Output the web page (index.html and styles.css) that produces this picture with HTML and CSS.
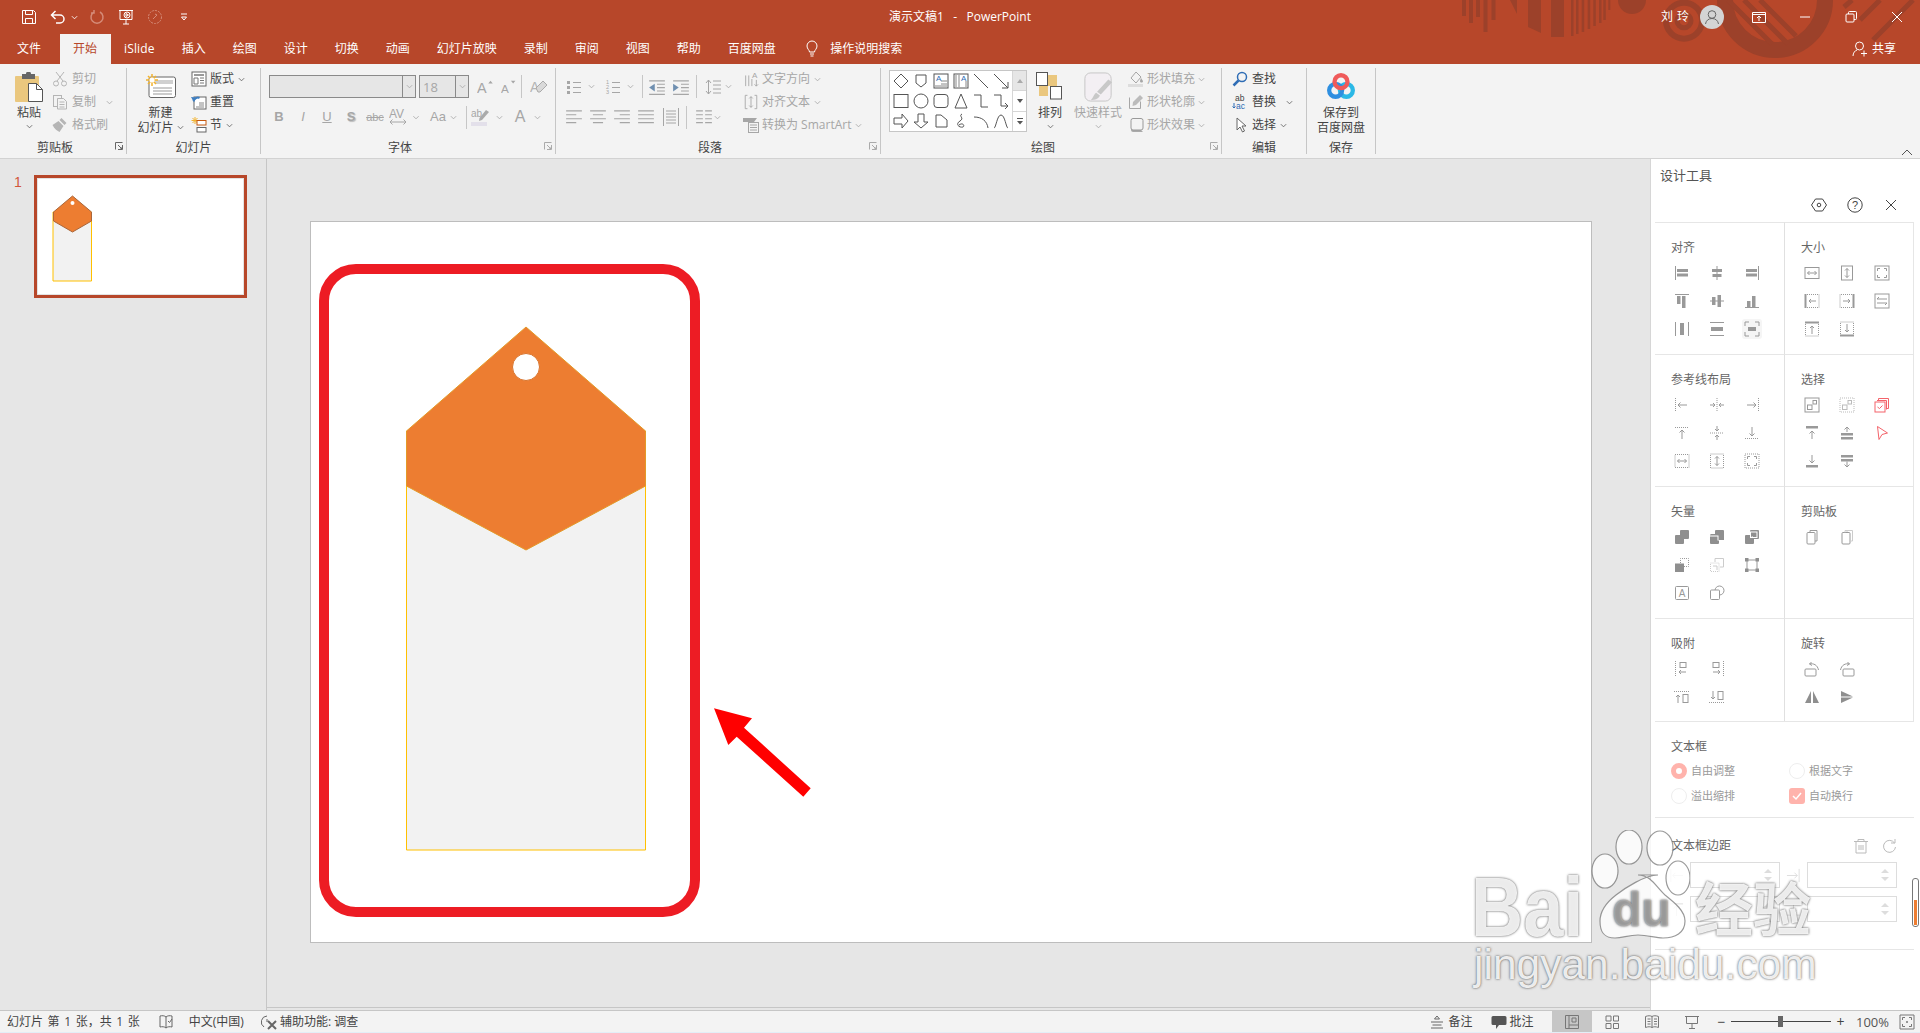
FILE: index.html
```html
<!DOCTYPE html>
<html lang="zh-CN">
<head>
<meta charset="utf-8">
<title>演示文稿1 - PowerPoint</title>
<link rel="stylesheet" href="styles.css">
</head>
<body>
<svg class="sprite" aria-hidden="true">
<defs>
<symbol id="chev" viewBox="0 0 8 8"><path d="M1 2.5l3 3 3-3"/></symbol>
<symbol id="a1" viewBox="0 0 16 16"><path d="M1.5 1v14"/><path fill="#999" stroke="none" d="M3 4h11v3H3zM3 8.5h11v3H3z"/></symbol>
<symbol id="a2" viewBox="0 0 16 16"><path d="M8 1v14"/><path fill="#999" stroke="none" d="M3 4h10v3H3zM3.5 9h9v3h-9z"/></symbol>
<symbol id="a3" viewBox="0 0 16 16"><path d="M14.5 1v14"/><path fill="#999" stroke="none" d="M2 4h11v3H2zM2 8.5h11v3H2z"/></symbol>
<symbol id="a4" viewBox="0 0 16 16"><path d="M1 1.5h14"/><path fill="#999" stroke="none" d="M3 3h3.5v8H3zM8 3h3.5v12H8z"/></symbol>
<symbol id="a5" viewBox="0 0 16 16"><path d="M1 8h14"/><path fill="#999" stroke="none" d="M3 4h3.5v8H3zM8.5 2H12v12H8.5z"/></symbol>
<symbol id="a6" viewBox="0 0 16 16"><path d="M1 14.5h14"/><path fill="#999" stroke="none" d="M3 8h3.5v6H3zM8 3h3.5v11H8z"/></symbol>
<symbol id="a7" viewBox="0 0 16 16"><path d="M1.5 1v14M14.5 1v14"/><path fill="#999" stroke="none" d="M6 2h4v12H6z"/></symbol>
<symbol id="a8" viewBox="0 0 16 16"><path d="M1 1.5h14M1 14.5h14"/><path fill="#999" stroke="none" d="M2 6h12v4H2z"/></symbol>
<symbol id="a9" viewBox="0 0 16 16"><path d="M1 5V1h4M11 1h4v4M15 11v4h-4M5 15H1v-4"/><path fill="#999" stroke="none" d="M4 6h8v4H4z"/></symbol>
<symbol id="s1" viewBox="0 0 16 16"><rect x="1" y="2.5" width="14" height="11"/><path d="M3.5 8h9M5.5 6l-2 2 2 2M10.5 6l2 2-2 2"/></symbol>
<symbol id="s2" viewBox="0 0 16 16"><rect x="2.5" y="1" width="11" height="14"/><path d="M8 3.5v9M6 5.500l2-2 2 2M6 10.500l2 2 2-2"/></symbol>
<symbol id="s3" viewBox="0 0 16 16"><rect x="1" y="1" width="14" height="14"/><path d="M3.500 6V3.500H6M10 3.500h2.500V6M12.500 10v2.500H10M6 12.500H3.500V10"/></symbol>
<symbol id="s4" viewBox="0 0 16 16"><path stroke-width="2" d="M1.500 1v14"/><path stroke-dasharray="1 1" d="M3 1.500h12v13H3"/><path d="M12 8H5M7 6L5 8l2 2"/></symbol>
<symbol id="s5" viewBox="0 0 16 16"><path stroke-width="2" d="M14.500 1v14"/><path stroke-dasharray="1 1" d="M13 1.500H1v13h12"/><path d="M4 8h7M9 6l2 2-2 2"/></symbol>
<symbol id="s6" viewBox="0 0 16 16"><rect x="1" y="1" width="14" height="14"/><path d="M3 6h10M3 6l2-2M13 10H3M13 10l-2 2"/></symbol>
<symbol id="s7" viewBox="0 0 16 16"><path stroke-width="2" d="M1 1.500h14"/><path stroke-dasharray="1 1" d="M1.500 3v12h13V3"/><path d="M8 13V5M6 7l2-2 2 2"/></symbol>
<symbol id="s8" viewBox="0 0 16 16"><path stroke-width="2" d="M1 14.500h14"/><path stroke-dasharray="1 1" d="M1.500 13V1h13v12"/><path d="M8 3v8M6 9l2 2 2-2"/></symbol>
<symbol id="g1" viewBox="0 0 16 16"><path stroke-dasharray="1 1" d="M1.500 1v14"/><path d="M13 8H4M6.500 5.500L4 8l2.500 2.500"/></symbol>
<symbol id="g2" viewBox="0 0 16 16"><path stroke-dasharray="1 1" d="M8 1v14"/><path d="M1 8h5M4 6l2 2-2 2M15 8h-5M12 6l-2 2 2 2"/></symbol>
<symbol id="g3" viewBox="0 0 16 16"><path stroke-dasharray="1 1" d="M14.500 1v14"/><path d="M3 8h9M9.500 5.500L12 8l-2.500 2.500"/></symbol>
<symbol id="g4" viewBox="0 0 16 16"><path stroke-dasharray="1 1" d="M1 2.500h14"/><path d="M8 14V5M5.500 7.500L8 5l2.500 2.500"/></symbol>
<symbol id="g5" viewBox="0 0 16 16"><path stroke-dasharray="1 1" d="M1 8h14"/><path d="M8 1v5M6 4l2 2 2-2M8 15v-5M6 12l2-2 2 2"/></symbol>
<symbol id="g6" viewBox="0 0 16 16"><path stroke-dasharray="1 1" d="M1 13.500h14"/><path d="M8 2v9M5.500 8.500L8 11l2.500-2.500"/></symbol>
<symbol id="g7" viewBox="0 0 16 16"><rect x="1" y="1.500" width="14" height="13" stroke-dasharray="1 1"/><path d="M3.500 8h9M5.500 6l-2 2 2 2M10.500 6l2 2-2 2"/></symbol>
<symbol id="g8" viewBox="0 0 16 16"><rect x="1.500" y="1" width="13" height="14" stroke-dasharray="1 1"/><path d="M8 3.500v9M6 5.500l2-2 2 2M6 10.500l2 2 2-2"/></symbol>
<symbol id="g9" viewBox="0 0 16 16"><rect x="1" y="1" width="14" height="14" stroke-dasharray="1 1"/><path d="M3.500 6V3.500H6M10 3.500h2.500V6M12.500 10v2.500H10M6 12.500H3.500V10"/></symbol>
<symbol id="se1" viewBox="0 0 16 16"><rect x="1" y="1" width="14" height="14"/><rect x="3.500" y="8" width="4.500" height="4.500"/><rect x="9" y="3.500" width="3.500" height="3.500"/></symbol>
<symbol id="se2" viewBox="0 0 16 16"><rect x="1" y="1" width="14" height="14" stroke-dasharray="1 1" stroke="#bbb"/><rect x="3.500" y="8" width="4.500" height="4.500" stroke="#bbb"/><rect x="9" y="3.500" width="3.500" height="3.500" stroke="#bbb"/></symbol>
<symbol id="se3" viewBox="0 0 16 16"><path stroke="#f4636a" d="M4.500 3.500v-2h10v10h-2"/><path stroke="#f4636a" d="M3 3.500h9.500v9"/><rect x="1" y="5" width="10" height="10" stroke="#f4636a"/><path stroke="#f4636a" d="M3.500 10l2 1.500L8.500 8.500"/></symbol>
<symbol id="se4" viewBox="0 0 16 16"><path fill="#999" stroke="none" d="M2 1h12v2.500H2z"/><path d="M8 14V6M5.500 8.500L8 6l2.500 2.500"/></symbol>
<symbol id="se5" viewBox="0 0 16 16"><path fill="#999" stroke="none" d="M2 8h12v2.500H2zM2 12h12v2.500H2z"/><path d="M8 7V2M5.500 4.500L8 2l2.500 2.500"/></symbol>
<symbol id="se6" viewBox="0 0 16 16"><path stroke="#f4636a" d="M3.500 1.500l10 6.500-5.500 1.500-3 5z"/></symbol>
<symbol id="se7" viewBox="0 0 16 16"><path fill="#999" stroke="none" d="M2 12h12v2.500H2z"/><path d="M8 2v8M5.500 7.500L8 10l2.500-2.500"/></symbol>
<symbol id="se8" viewBox="0 0 16 16"><path fill="#999" stroke="none" d="M2 2h12v2.500H2zM2 6h12v2.500H2z"/><path d="M8 8.500V14M5.500 11.500L8 14l2.500-2.500"/></symbol>
<symbol id="v1" viewBox="0 0 16 16"><path fill="#8f8f8f" stroke="none" d="M2 6h4V2q0-1 1-1h7q1 0 1 1v7q0 1-1 1h-4v4q0 1-1 1H2q-1 0-1-1V7q0-1 1-1z"/></symbol>
<symbol id="v2" viewBox="0 0 16 16"><path fill="#8f8f8f" stroke="none" d="M1 6.500h8.500V11H15V2q0-1-1-1H7q-1 0-1 1v3H2q-1 0-1 1.500zM1 7.500V14q0 1 1 1h7q1 0 1-1v-2.500H8.500V7.500z"/></symbol>
<symbol id="v3" viewBox="0 0 16 16"><path fill="#8f8f8f" fill-rule="evenodd" stroke="none" d="M2 6h4V2q0-1 1-1h7q1 0 1 1v7q0 1-1 1h-4v4q0 1-1 1H2q-1 0-1-1V7q0-1 1-1zM7.500 7.500V9h1.500V7.500z"/><rect x="6.500" y="3" width="6.500" height="5.500" fill="none" stroke="#fff"/></symbol>
<symbol id="v4" viewBox="0 0 16 16"><path stroke-dasharray="1 1" d="M6.500 6V1.500h8v8H10"/><path fill="#8f8f8f" stroke="none" d="M1 6.500h9v8.500H1z"/></symbol>
<symbol id="v5" viewBox="0 0 16 16"><g stroke="#ccc"><rect x="1.500" y="6" width="8.500" height="8.500" stroke-dasharray="1 1"/><path d="M6 5V1.500h8.500V10H11"/><path d="M4 9h4v4"/></g></symbol>
<symbol id="v6" viewBox="0 0 16 16"><rect x="3" y="3" width="10" height="10"/><path fill="#8f8f8f" stroke="none" d="M1 1h3.500v3.500H1zM11.500 1H15v3.500h-3.500zM1 11.500h3.500V15H1zM11.500 11.500H15V15h-3.500z"/></symbol>
<symbol id="v7" viewBox="0 0 16 16"><rect x="1.500" y="1.500" width="13" height="13" rx="1"/><text class="svgt" x="8" y="12" font-size="10" fill="#999" stroke="none" text-anchor="middle">A</text></symbol>
<symbol id="v8" viewBox="0 0 16 16"><circle cx="10.500" cy="5.500" r="4.500"/><rect x="1.500" y="5" width="9" height="9.500" rx="1" fill="#fff"/></symbol>
<symbol id="c1" viewBox="0 0 16 16"><rect x="3" y="3.500" width="8" height="11.500" rx="1"/><path d="M6 3.500v-2h7v10.500h-2"/></symbol>
<symbol id="c2" viewBox="0 0 16 16"><rect x="3" y="3.500" width="8" height="11.500" rx="1"/><path stroke="#ccc" d="M6 3.500v-2h7.500v10.500H11"/><path stroke="#ccc" d="M8 1v2"/></symbol>
<symbol id="n1" viewBox="0 0 16 16"><path stroke-dasharray="1 1" d="M1.500 0v16"/><rect x="6" y="1.500" width="6" height="5"/><path d="M12 11H5M7 9l-2 2 2 2"/></symbol>
<symbol id="n2" viewBox="0 0 16 16"><path stroke-dasharray="1 1" d="M14.500 0v16"/><rect x="4" y="1.500" width="6" height="5"/><path d="M4 11h7M9 9l2 2-2 2"/></symbol>
<symbol id="n3" viewBox="0 0 16 16"><path stroke-dasharray="1 1" d="M0 2.500h16"/><rect x="9" y="5.500" width="5" height="8"/><path d="M4 14V6M2 8l2-2 2 2"/></symbol>
<symbol id="n4" viewBox="0 0 16 16"><path stroke-dasharray="1 1" d="M0 13.500h16"/><rect x="9" y="2.500" width="5" height="8"/><path d="M4 2v8M2 8l2 2 2-2"/></symbol>
<symbol id="r1" viewBox="0 0 16 16"><rect x="1" y="8" width="11" height="7" rx="1"/><path d="M5.500 3c4-1 8 1 9 6M5.500 3l2-2M5.500 3l2.500 1.500"/></symbol>
<symbol id="r2" viewBox="0 0 16 16"><rect x="4" y="8" width="11" height="7" rx="1"/><path d="M10.500 3c-4-1-8 1-9 6M10.500 3l-2-2M10.500 3L8 4.500"/></symbol>
<symbol id="r3" viewBox="0 0 16 16"><path fill="#8f8f8f" stroke="none" d="M7 2v12H1zM9 2v12h6z"/></symbol>
<symbol id="r4" viewBox="0 0 16 16"><path fill="#8f8f8f" stroke="none" d="M2 2l12 5.500H2zM2 8.500h12L2 14z"/></symbol>

<symbol id="paste" viewBox="0 0 28 30"><rect x="0" y="4" width="24" height="26" rx="1" fill="#eac77e" stroke="none"/><path fill="#666" stroke="none" d="M7 2h4a2.500 2.500 0 0 1 5 0h4v5H7z"/><path fill="#fff" stroke="#555" d="M13.500 11.500h8l6 6v12h-14z"/><path stroke="#555" d="M21.500 11.500v6h6"/></symbol>
<symbol id="scis" viewBox="0 0 16 16"><path stroke="#b5b5b5" d="M4 1l7 9M12 1l-7 9"/><circle cx="4" cy="12.500" r="2.500" stroke="#b5b5b5"/><circle cx="12" cy="12.500" r="2.500" stroke="#b5b5b5"/></symbol>
<symbol id="copy" viewBox="0 0 16 16"><g stroke="#b5b5b5"><rect x="1.500" y="1.500" width="8" height="11"/><path fill="#f3f3f3" d="M5.500 4.500h6l3 3v7.500h-9z"/><path d="M7.500 8h5M7.500 10.500h5M7.500 13h5"/></g></symbol>
<symbol id="brush" viewBox="0 0 16 16"><path fill="#b5b5b5" stroke="none" d="M9.500 1l5 5-2 2-5-5zM6.500 4l5 5-4 6c-2-1-5-3-7-7z"/></symbol>
<symbol id="newsl" viewBox="0 0 30 24"><rect x="3" y="3" width="26.500" height="20.500" rx="2" fill="#fff" stroke="#666"/><path fill="#d0d0d0" stroke="none" d="M9 6h18v4H9z"/><path stroke="#999" d="M7 14h19M7 17h19M7 20h19"/><path stroke="#f2b32e" stroke-width="1.500" d="M6 0v12M0 6h12M2 2l8 8M10 2l-8 8"/><circle cx="6" cy="6" r="2.500" fill="#fff" stroke="none"/></symbol>
<symbol id="layout" viewBox="0 0 16 16"><rect x="1" y="1" width="14" height="14" fill="#fff" stroke="#666"/><path fill="#999" stroke="none" d="M3 3h10v2H3z"/><path stroke="#777" d="M3 7h4v6H3zM9 7h4M9 9.500h4M9 12h4"/></symbol>
<symbol id="reset" viewBox="0 0 16 16"><rect x="3" y="3" width="12" height="12" fill="#fff" stroke="#666"/><path stroke="#888" d="M8 9h5M8 11h5M5 13h8"/><path fill="none" stroke="#3f7fc1" stroke-width="2" d="M2.500 7c1-3 4-4 6-3"/><path fill="#3f7fc1" stroke="none" d="M0 3l5 .5-2 5z"/></symbol>
<symbol id="sect" viewBox="0 0 16 16"><path stroke="#f2b32e" d="M4 0v7M.5 3.500h7M1.500 1l5 5M6.500 1l-5 5"/><rect x="6" y="3.500" width="9" height="4.500" fill="#fff" stroke="#c55a11"/><rect x="6" y="10.500" width="9" height="4.500" fill="#fff" stroke="#666"/></symbol>
<symbol id="grow" viewBox="0 0 20 20"><text class="svgt" x="0" y="17" font-size="16" fill="#a6a6a6" stroke="none">A</text><path fill="#a6a6a6" stroke="none" d="M12.500 6L15 3l2.500 3z"/></symbol>
<symbol id="shrink" viewBox="0 0 20 20"><text class="svgt" x="0" y="17" font-size="13" fill="#a6a6a6" stroke="none">A</text><path fill="#a6a6a6" stroke="none" d="M11 3l2.500 3L16 3z"/></symbol>
<symbol id="clear" viewBox="0 0 18 18"><text class="svgt" x="0" y="14" font-size="14" fill="#b5b5b5" stroke="none">A</text><path fill="#d9d9d9" stroke="#aaa" d="M6 10l7-7 4 4-7 7H8z"/></symbol>
<symbol id="avt" viewBox="0 0 20 20"><text class="svgt" x="0" y="11" font-size="12" fill="#a6a6a6" stroke="none">AV</text><path stroke="#a6a6a6" d="M1 15h16M3.500 12.500L1 15l2.500 2.500M14.500 12.500L17 15l-2.500 2.500"/></symbol>
<symbol id="hilite" viewBox="0 0 20 20"><text class="svgt" x="0" y="10" font-size="10" fill="#a6a6a6" stroke="none">ab</text><path fill="#aaa" stroke="none" d="M15 3l3 2-7 8-3 1 .5-3z"/><path fill="#e3e0ea" stroke="none" d="M0 15h16v4H0z"/></symbol>
<symbol id="bul" viewBox="0 0 16 16"><path fill="#a6a6a6" stroke="none" d="M1 2h3v3H1zM1 7h3v3H1zM1 12h3v3H1z"/><path stroke="#a6a6a6" d="M7 3.500h8M7 8.500h8M7 13.500h8"/></symbol>
<symbol id="num" viewBox="0 0 16 16"><text class="svgt" font-size="5.500" fill="#a6a6a6" stroke="none"><tspan x="1" y="5">1</tspan><tspan x="1" y="10">2</tspan><tspan x="1" y="15">3</tspan></text><path stroke="#a6a6a6" d="M7 3.500h8M7 8.500h8M7 13.500h8"/></symbol>
<symbol id="indd" viewBox="0 0 16 16"><path stroke="#a6a6a6" d="M1 2.500h14M8 5.500h7M8 8.500h7M8 11.500h7M1 14.500h14"/><path fill="#6f8fb0" stroke="none" d="M6 5v7L1 8.500z"/></symbol>
<symbol id="indi" viewBox="0 0 16 16"><path stroke="#a6a6a6" d="M1 2.500h14M8 5.500h7M8 8.500h7M8 11.500h7M1 14.500h14"/><path fill="#6f8fb0" stroke="none" d="M1 5v7l5-3.500z"/></symbol>
<symbol id="lsp" viewBox="0 0 16 18"><path stroke="#a6a6a6" d="M8 3h8M8 7h8M8 11h8M8 15h8M3.500 2v14M1 5l2.500-3L6 5M1 13l2.500 3L6 13"/></symbol>
<symbol id="tdir" viewBox="0 0 16 18"><path stroke="#a6a6a6" d="M2 5v12M5.500 5v12M9 9v8"/><text class="svgt" x="9" y="8" font-size="9" fill="#a6a6a6" stroke="none">A</text><path stroke="#a6a6a6" d="M14 10v7M12 15l2 2 2-2"/></symbol>
<symbol id="talign" viewBox="0 0 16 18"><path stroke="#a6a6a6" d="M4 1.500H1.500v15H4M12 1.500h2.500v15H12M8 3v12M6 5l2-2 2 2M6 13l2 2 2-2"/></symbol>
<symbol id="art" viewBox="0 0 16 16"><path fill="#a6a6a6" stroke="none" d="M0 1h14l-3 4H0z"/><rect x="5.500" y="5.500" width="10" height="10" fill="#f3f3f3" stroke="#a6a6a6"/><path stroke="#a6a6a6" d="M7 8h7M7 10.500h7M7 13h7"/></symbol>
<symbol id="al" viewBox="0 0 16 16"><path stroke="#a6a6a6" d="M1 2.500h14M1 6h9M1 9.500h14M1 13h9"/></symbol>
<symbol id="ac" viewBox="0 0 16 16"><path stroke="#a6a6a6" d="M1 2.500h14M3.500 6h9M1 9.500h14M3.500 13h9"/></symbol>
<symbol id="ar" viewBox="0 0 16 16"><path stroke="#a6a6a6" d="M1 2.500h14M6 6h9M1 9.500h14M6 13h9"/></symbol>
<symbol id="aj" viewBox="0 0 16 16"><path stroke="#a6a6a6" d="M1 2.500h14M1 6h14M1 9.500h14M1 13h14"/></symbol>
<symbol id="ad" viewBox="0 0 16 18"><path stroke="#a6a6a6" d="M.5 0v18M15.500 0v18M3 3h10M3 6h10M3 9h10M3 12h10M3 15h10"/></symbol>
<symbol id="cols" viewBox="0 0 16 16"><path stroke="#a6a6a6" d="M1 2.500h6M1 6h6M1 9.500h6M1 13h6M9 2.500h6M9 6h6M9 9.500h6M9 13h6"/></symbol>
<symbol id="arrange" viewBox="0 0 28 28"><path fill="#eac77e" stroke="none" d="M12 3h9v11h-9zM3 14h9v10H3z"/><rect x="0.500" y="0.500" width="11" height="13" fill="#fff" stroke="#555"/><rect x="14.500" y="14.500" width="11" height="12.500" fill="#fff" stroke="#555"/></symbol>
<symbol id="qstyle" viewBox="0 0 32 32"><rect x="2" y="1" width="28" height="30" rx="6" fill="#f3eff3" stroke="#c4c4c4"/><path fill="#c8c8c8" stroke="none" d="M27 8l4 3-12 13-4-3z"/><path fill="#c8c8c8" stroke="none" d="M14 22l4 3c-1 3-5 5-10 5 3-2 3-6 6-8z"/></symbol>
<symbol id="fill" viewBox="0 0 16 16"><path stroke="#a6a6a6" d="M8 1l5 5-5 6-5-5z"/><path fill="#a6a6a6" stroke="none" d="M13 7l2 3c0 2-3 2-3 0z"/><path fill="#ddd" stroke="none" d="M0 13h15v3H0z"/></symbol>
<symbol id="line" viewBox="0 0 16 16"><path stroke="#a6a6a6" d="M1.500 3.500v11h11v-7"/><path fill="#bbb" stroke="none" d="M12 1l3 3-7 7-3.500 1 .5-4z"/></symbol>
<symbol id="effect" viewBox="0 0 16 16"><path fill="#aaa" stroke="none" d="M3 3v10c0 1 1 2 2 2h10z"/><rect x="3" y="1.500" width="12" height="11.500" rx="2" fill="#f3f3f3" stroke="#999"/></symbol>
<symbol id="find" viewBox="0 0 16 16"><circle cx="10" cy="6" r="4.500" stroke="#2f6db5" stroke-width="1.500"/><path stroke="#2f6db5" stroke-width="2.500" d="M6.500 9.500L1.500 14.500"/></symbol>
<symbol id="repl" viewBox="0 0 16 16"><text class="svgt" font-size="8.500" fill="#444" stroke="none"><tspan x="3" y="7">ab</tspan><tspan x="4" y="15" fill="#2f6db5">ac</tspan></text><path stroke="#2f6db5" d="M2 9v5M0.500 12.500L2 14l1.500-1.500"/></symbol>
<symbol id="sel" viewBox="0 0 16 16"><path fill="#fff" stroke="#666" d="M5 1v12l3-3 2.500 5 2-1-2.500-5h4z"/></symbol>
<symbol id="bdsave" viewBox="0 0 26 26"><g fill="none" stroke-width="4"><circle cx="18" cy="17" r="6" stroke="#2bb8e6"/><circle cx="8" cy="17" r="6" stroke="#2e8fe0"/><circle cx="13" cy="9" r="6" stroke="#ef5a5a"/></g></symbol>
<symbol id="launch" viewBox="0 0 8 8"><path d="M.5 7.500v-7h7M7.500 3v4.500H3M3 3l4 4M7 5v2H5"/></symbol>
</defs>
</svg>

<div class="app">
<header class="titlebar">
  <svg class="ornament" viewBox="0 0 520 64" aria-hidden="true">
    <defs><clipPath id="bigclip"><circle cx="375" cy="0" r="58"/></clipPath></defs>
    <g fill="#9c412a" stroke="none">
      <path d="M62 0h4v16h-4zM69 0h4v23h-4zM76 0h4v17h-4zM83.500 0h4v32h-4zM91.500 0h4v20h-4zM110 0h7v14zM128 0h13v33l-13-6zM151 0h13v37h-13zM171 0h2.500v36H171zM176 0h2.500v34H176zM181.700 0h2.500v32h-2.500zM187.700 0h2.500v29h-2.500zM193.300 0h2.500v26h-2.500zM199 0h2.500v23H199zM203.300 0h2.500v20h-2.500zM208.300 0h2v10h-2z"/>
      <circle cx="232" cy="0" r="14"/>
    </g>
    <g fill="none" stroke="#9c412a">
      <circle cx="284" cy="20.700" r="18" stroke-width="6"/>
      <circle cx="284" cy="20.700" r="7" stroke-width="5"/>
      <circle cx="375" cy="0" r="50" stroke-width="16"/>
      <g clip-path="url(#bigclip)" stroke-width="5"><path d="M328 0l44 44M344 0l44 44M360 0l36 36"/></g>
      <path stroke-width="5" d="M452 0l-8 7M480 0l-20 20M513 0l-40 40"/>
    </g>
  </svg>
  <div class="qat">
    <svg class="ic white first" viewBox="0 0 16 16"><path d="M1.500 1.500h11l2 2v11h-13z"/><path d="M4.500 1.500v4h7v-4M4.500 14.500v-5h7v5"/></svg>
    <svg class="ic white undo" viewBox="0 0 16 16"><path stroke-width="1.500" d="M2 6h8a4 4 0 0 1 0 8H6M5.500 2L1.500 6l4 4"/></svg>
    <svg class="chev white mini1"><use href="#chev"/></svg>
    <svg class="ic dim redo" viewBox="0 0 16 16"><path stroke-width="1.500" d="M11 3a6 6 0 1 1-6 0M5 1v3H2"/></svg>
    <svg class="ic white qgap" viewBox="0 0 16 16"><path d="M1 1.500h14M2 1.500v9h12v-9M8 10.500V15M5 15h6"/><circle cx="9" cy="6" r="3"/><path d="M8 4.500L10.500 6 8 7.500z"/></svg>
    <svg class="ic dim qgap" viewBox="0 0 16 16"><circle cx="8" cy="8" r="6.500" stroke-dasharray="2 1"/><path d="M6 10l4-4M8 5l2 1"/></svg>
    <svg class="chev white more" viewBox="0 0 8 8"><path d="M1 1h6M1.500 4h5l-2.500 3z"/></svg>
  </div>
  <div class="doctitle">演示文稿1 &nbsp;&nbsp;- &nbsp;&nbsp;PowerPoint</div>
  <div class="winbox">
    <span class="uname">刘玲</span>
    <span class="avatar"><svg class="ic grey" viewBox="0 0 16 16"><circle cx="8" cy="5.500" r="3.800"/><path d="M1.500 15c.5-3.500 3-5.500 6.500-5.500s6 2 6.500 5.500"/></svg></span>
    <span class="wbtn"><svg class="ic white" viewBox="0 0 16 16"><path d="M1.500 3.500h13v10h-13zM1.500 5.500h13M8 12V7.500M6 9l2-2 2 2"/></svg></span>
    <span class="wbtn"><svg class="ic white" viewBox="0 0 16 16"><path d="M3 8h10"/></svg></span>
    <span class="wbtn"><svg class="ic white" viewBox="0 0 16 16"><rect x="3" y="5" width="8" height="8" rx="1"/><path d="M5.500 5V3.500q0-1 1-1h6q1 0 1 1v6q0 1-1 1H11"/></svg></span>
    <span class="wbtn"><svg class="ic white" viewBox="0 0 16 16"><path d="M3 3l10 10M13 3L3 13"/></svg></span>
  </div>
</header>

<nav class="tabs">
  <span class="tab tab-file">文件</span>
  <span class="tab active">开始</span>
  <span class="tab islide">iSlide</span>
  <span class="tab">插入</span>
  <span class="tab">绘图</span>
  <span class="tab">设计</span>
  <span class="tab">切换</span>
  <span class="tab">动画</span>
  <span class="tab">幻灯片放映</span>
  <span class="tab">录制</span>
  <span class="tab">审阅</span>
  <span class="tab">视图</span>
  <span class="tab">帮助</span>
  <span class="tab">百度网盘</span>
  <svg class="ic white bulb" viewBox="0 0 16 16"><path d="M5.500 11c0-2-2.500-3-2.500-6a5 5 0 0 1 10 0c0 3-2.500 4-2.500 6zM6 13h4M6.500 15h3"/></svg>
  <span class="tab tellme">操作说明搜索</span>
  <span class="share"><svg class="ic white" viewBox="0 0 16 16"><circle cx="7.500" cy="5" r="4"/><path d="M1 15c0-3 2-5.500 4-6M9 12.500h6M12 9.500v6"/></svg>共享</span>
</nav>

<section class="ribbon">
  <div class="group g-clip">
    <div class="gbody">
      <div class="lbtn paste-btn"><svg class="paste-ic"><use href="#paste"/></svg><span class="ltext">粘贴</span><svg class="chev"><use href="#chev"/></svg></div>
      <div class="scol">
        <div class="srow off"><svg class="ic grey"><use href="#scis"/></svg>剪切</div>
        <div class="srow off"><svg class="ic grey"><use href="#copy"/></svg>复制<svg class="chev light ml"><use href="#chev"/></svg></div>
        <div class="srow off"><svg class="ic grey"><use href="#brush"/></svg>格式刷</div>
      </div>
    </div>
    <div class="glabel lc">剪贴板<svg class="launch"><use href="#launch"/></svg></div>
  </div>

  <div class="group g-slide">
    <div class="gbody">
      <div class="lbtn new-btn"><svg class="new-ic"><use href="#newsl"/></svg><span class="ltext">新建</span><span class="ltext">幻灯片<svg class="chev inl"><use href="#chev"/></svg></span></div>
      <div class="scol tight">
        <div class="srow"><svg class="ic"><use href="#layout"/></svg>版式<svg class="chev"><use href="#chev"/></svg></div>
        <div class="srow"><svg class="ic"><use href="#reset"/></svg>重置</div>
        <div class="srow"><svg class="ic"><use href="#sect"/></svg>节<svg class="chev"><use href="#chev"/></svg></div>
      </div>
    </div>
    <div class="glabel">幻灯片</div>
  </div>

  <div class="group g-font">
    <div class="gbody col">
      <div class="trow top">
        <span class="combo c-name"><i class="drop"><svg class="chev light"><use href="#chev"/></svg></i></span>
        <span class="combo c-size"><em>18</em><i class="drop"><svg class="chev light"><use href="#chev"/></svg></i></span>
        <svg class="tic m8"><use href="#grow"/></svg>
        <svg class="tic m6"><use href="#shrink"/></svg>
        <i class="vsep m2"></i>
        <svg class="tic m8"><use href="#clear"/></svg>
      </div>
      <div class="trow bot first-b">
        <b class="tx">B</b><i class="tx it">I</i><u class="tx">U</u><b class="tx shadow">S</b><s class="tx small">abc</s>
        <span class="tx"><svg class="tic"><use href="#avt"/></svg></span><svg class="chev light w10"><use href="#chev"/></svg>
        <span class="tx m5">Aa</span><svg class="chev light"><use href="#chev"/></svg>
        <i class="vsep m9"></i>
        <span class="tx m2"><svg class="tic"><use href="#hilite"/></svg></span><svg class="chev light m3"><use href="#chev"/></svg>
        <span class="tx big m5">A</span><svg class="chev light m2"><use href="#chev"/></svg>
      </div>
    </div>
    <div class="glabel lc">字体<svg class="launch dim2"><use href="#launch"/></svg></div>
  </div>

  <div class="group g-para">
    <div class="gbody">
      <div class="pleft">
        <div class="trow top">
          <svg class="tic w20 m8"><use href="#bul"/></svg><svg class="chev light m4"><use href="#chev"/></svg>
          <svg class="tic w20 m8"><use href="#num"/></svg><svg class="chev light m4"><use href="#chev"/></svg>
          <i class="vsep m8"></i>
          <svg class="tic m5"><use href="#indd"/></svg><svg class="tic m6"><use href="#indi"/></svg>
          <i class="vsep m6"></i>
          <svg class="tic m7"><use href="#lsp"/></svg><svg class="chev light m3"><use href="#chev"/></svg>
        </div>
        <div class="trow bot">
          <svg class="tic m9"><use href="#al"/></svg><svg class="tic m6"><use href="#ac"/></svg><svg class="tic m6"><use href="#ar"/></svg><svg class="tic m6"><use href="#aj"/></svg><svg class="tic m7"><use href="#ad"/></svg>
          <i class="vsep m6"></i>
          <svg class="tic m8"><use href="#cols"/></svg><svg class="chev light m1"><use href="#chev"/></svg>
        </div>
      </div>
      <div class="scol flat">
        <div class="srow off"><svg class="ic"><use href="#tdir"/></svg>文字方向<svg class="chev light"><use href="#chev"/></svg></div>
        <div class="srow off"><svg class="ic"><use href="#talign"/></svg>对齐文本<svg class="chev light"><use href="#chev"/></svg></div>
        <div class="srow off nowrap"><svg class="ic"><use href="#art"/></svg>转换为 SmartArt<svg class="chev light"><use href="#chev"/></svg></div>
      </div>
    </div>
    <div class="glabel lc">段落<svg class="launch dim2"><use href="#launch"/></svg></div>
  </div>

  <div class="group g-draw">
    <div class="gbody">
      <div class="gallery">
        <div class="shapes">
          <svg class="sh" viewBox="0 0 16 16"><path d="M8 1l7 7-7 7-7-7z"/></svg>
          <svg class="sh" viewBox="0 0 16 16"><path d="M3 2h10v8l-5 4-5-4z"/></svg>
          <svg class="sh" viewBox="0 0 16 16"><rect x="1" y="1" width="14" height="14"/><path stroke="#888" d="M8 8h6M8 11h6M2 13h12"/><text class="svgt" x="3" y="8" font-size="8" fill="#2f6db5" stroke="none">A</text></svg>
          <svg class="sh" viewBox="0 0 16 16"><rect x="1" y="1" width="14" height="14"/><path stroke="#888" d="M3 2v12M6 2v12M13 8v6"/><text class="svgt" x="8" y="8" font-size="8" fill="#2f6db5" stroke="none">A</text></svg>
          <svg class="sh" viewBox="0 0 16 16"><path d="M1 1l14 14"/></svg>
          <svg class="sh" viewBox="0 0 16 16"><path d="M1 1l14 14M15 9v6H9"/></svg>
          <svg class="sh" viewBox="0 0 16 16"><rect x="1" y="1.500" width="14" height="13"/></svg>
          <svg class="sh" viewBox="0 0 16 16"><circle cx="8" cy="8" r="7"/></svg>
          <svg class="sh" viewBox="0 0 16 16"><rect x="1" y="1.500" width="14" height="13" rx="3"/></svg>
          <svg class="sh" viewBox="0 0 16 16"><path d="M8 1l6 14H2z"/></svg>
          <svg class="sh" viewBox="0 0 16 16"><path d="M1 2h7v12h7"/></svg>
          <svg class="sh" viewBox="0 0 16 16"><path d="M1 2h7v11h7M12 10l3 3-3 3"/></svg>
          <svg class="sh" viewBox="0 0 16 16"><path d="M1 5h8V1l6 7-6 7v-4H1z"/></svg>
          <svg class="sh" viewBox="0 0 16 16"><path d="M5 1h6v8h4l-7 6-7-6h4z"/></svg>
          <svg class="sh" viewBox="0 0 16 16"><path d="M3 2h5l6 5v7H3z"/></svg>
          <svg class="sh" viewBox="0 0 16 16"><path d="M9 1C5 3 12 5 7 8s-1 7 3 6c2-1 0-5-4-2"/></svg>
          <svg class="sh" viewBox="0 0 16 16"><path d="M1 4c8 0 13 4 14 11"/></svg>
          <svg class="sh" viewBox="0 0 16 16"><path d="M1 15C3 15 4 2 8 2s5 13 7 13"/></svg>
        </div>
        <div class="gscroll">
          <span class="gs on"><svg viewBox="0 0 8 8"><path d="M1 6l3-4 3 4z"/></svg></span>
          <span class="gs"><svg viewBox="0 0 8 8"><path d="M1 2l3 4 3-4z"/></svg></span>
          <span class="gs"><svg viewBox="0 0 8 8"><path d="M1 1h6v1H1zM1 4h6L4 7.500z"/></svg></span>
        </div>
      </div>
      <div class="lbtn arr-btn"><svg class="arr-ic"><use href="#arrange"/></svg><span class="ltext">排列</span><svg class="chev"><use href="#chev"/></svg></div>
      <div class="lbtn qs-btn off"><svg class="qs-ic"><use href="#qstyle"/></svg><span class="ltext">快速样式</span><svg class="chev light"><use href="#chev"/></svg></div>
      <div class="scol draw-s">
        <div class="srow off"><svg class="ic"><use href="#fill"/></svg>形状填充<svg class="chev light"><use href="#chev"/></svg></div>
        <div class="srow off"><svg class="ic"><use href="#line"/></svg>形状轮廓<svg class="chev light"><use href="#chev"/></svg></div>
        <div class="srow off"><svg class="ic"><use href="#effect"/></svg>形状效果<svg class="chev light"><use href="#chev"/></svg></div>
      </div>
    </div>
    <div class="glabel lc">绘图<svg class="launch dim2"><use href="#launch"/></svg></div>
  </div>

  <div class="group g-edit">
    <div class="gbody">
      <div class="scol edit-s">
        <div class="srow"><svg class="ic"><use href="#find"/></svg>查找</div>
        <div class="srow"><svg class="ic"><use href="#repl"/></svg>替换<svg class="chev ml"><use href="#chev"/></svg></div>
        <div class="srow"><svg class="ic"><use href="#sel"/></svg>选择<svg class="chev"><use href="#chev"/></svg></div>
      </div>
    </div>
    <div class="glabel">编辑</div>
  </div>

  <div class="group g-save">
    <div class="gbody">
      <div class="lbtn save-btn"><svg class="save-ic"><use href="#bdsave"/></svg><span class="ltext">保存到</span><span class="ltext">百度网盘</span></div>
    </div>
    <div class="glabel">保存</div>
  </div>
  <svg class="collapse" viewBox="0 0 12 8"><path d="M1 7l5-5 5 5"/></svg>
</section>

<main class="main">
  <aside class="thumbs">
    <span class="num">1</span>
    <div class="thumb">
      <svg viewBox="37 178 207 117">
        <path fill="#f2f2f2" stroke="#ffc000" d="M53 212v69h38.500v-69z"/>
        <path fill="#ed7d31" stroke="#a9663a" d="M72.500 196L91.500 212v9l-19 11-19-11v-9z"/>
        <circle cx="72.500" cy="203" r="2" fill="#fff"/>
      </svg>
    </div>
  </aside>

  <div class="work">
    <div class="canvas">
      <div class="slide">
        <svg viewBox="311 222 1280 720">
          <rect x="324" y="269" width="371" height="643" rx="32" fill="none" stroke="#ed1c24" stroke-width="10"/>
          <path fill="#f2f2f2" stroke="#ffc000" d="M406.500 431v419h239V431z"/>
          <path fill="#ed7d31" stroke="#e39a28" d="M526 327l119.500 104v55L526 550l-119.500-64v-55z"/>
          <circle cx="526" cy="367" r="13.500" fill="#fff" stroke="#d9742c"/>
          <path fill="#f00" d="M714 708.300l38 10-8 9.400 66.700 60.600-7.400 8.400-66.600-60-8.400 8.300z"/>
        </svg>
      </div>
    </div>
    <div class="strip"></div>
  </div>

  <aside class="panel">
    <div class="ptitle">设计工具</div>
    <div class="ptools">
      <svg class="ic dark" viewBox="0 0 16 16"><path d="M4.500 2h7L15.500 8l-4 6h-7L.5 8z"/><circle cx="8" cy="8" r="1.800"/></svg>
      <svg class="ic dark" viewBox="0 0 16 16"><circle cx="8" cy="8" r="7.200"/><text class="svgt" x="8" y="12" font-size="11" fill="#444" stroke="none" text-anchor="middle">?</text></svg>
      <svg class="ic dark" viewBox="0 0 16 16"><path d="M3 3l10 10M13 3L3 13"/></svg>
    </div>
    <div class="pgrid">
      <section class="sec"><h4>对齐</h4><div class="icons">
        <svg class="ic"><use href="#a1"/></svg><svg class="ic"><use href="#a2"/></svg><svg class="ic"><use href="#a3"/></svg>
        <svg class="ic"><use href="#a4"/></svg><svg class="ic"><use href="#a5"/></svg><svg class="ic"><use href="#a6"/></svg>
        <svg class="ic"><use href="#a7"/></svg><svg class="ic"><use href="#a8"/></svg><svg class="ic hov"><use href="#a9"/></svg>
      </div></section>
      <section class="sec"><h4>大小</h4><div class="icons">
        <svg class="ic"><use href="#s1"/></svg><svg class="ic"><use href="#s2"/></svg><svg class="ic"><use href="#s3"/></svg>
        <svg class="ic"><use href="#s4"/></svg><svg class="ic"><use href="#s5"/></svg><svg class="ic"><use href="#s6"/></svg>
        <svg class="ic"><use href="#s7"/></svg><svg class="ic"><use href="#s8"/></svg>
      </div></section>
      <section class="sec"><h4>参考线布局</h4><div class="icons">
        <svg class="ic"><use href="#g1"/></svg><svg class="ic"><use href="#g2"/></svg><svg class="ic"><use href="#g3"/></svg>
        <svg class="ic"><use href="#g4"/></svg><svg class="ic"><use href="#g5"/></svg><svg class="ic"><use href="#g6"/></svg>
        <svg class="ic"><use href="#g7"/></svg><svg class="ic"><use href="#g8"/></svg><svg class="ic"><use href="#g9"/></svg>
      </div></section>
      <section class="sec"><h4>选择</h4><div class="icons">
        <svg class="ic"><use href="#se1"/></svg><svg class="ic"><use href="#se2"/></svg><svg class="ic"><use href="#se3"/></svg>
        <svg class="ic"><use href="#se4"/></svg><svg class="ic"><use href="#se5"/></svg><svg class="ic"><use href="#se6"/></svg>
        <svg class="ic"><use href="#se7"/></svg><svg class="ic"><use href="#se8"/></svg>
      </div></section>
      <section class="sec"><h4>矢量</h4><div class="icons">
        <svg class="ic"><use href="#v1"/></svg><svg class="ic"><use href="#v2"/></svg><svg class="ic"><use href="#v3"/></svg>
        <svg class="ic"><use href="#v4"/></svg><svg class="ic"><use href="#v5"/></svg><svg class="ic"><use href="#v6"/></svg>
        <svg class="ic"><use href="#v7"/></svg><svg class="ic"><use href="#v8"/></svg>
      </div></section>
      <section class="sec"><h4>剪贴板</h4><div class="icons">
        <svg class="ic"><use href="#c1"/></svg><svg class="ic"><use href="#c2"/></svg>
      </div></section>
      <section class="sec short"><h4>吸附</h4><div class="icons">
        <svg class="ic"><use href="#n1"/></svg><svg class="ic"><use href="#n2"/></svg><span></span>
        <svg class="ic"><use href="#n3"/></svg><svg class="ic"><use href="#n4"/></svg>
      </div></section>
      <section class="sec short"><h4>旋转</h4><div class="icons">
        <svg class="ic"><use href="#r1"/></svg><svg class="ic"><use href="#r2"/></svg><span></span>
        <svg class="ic"><use href="#r3"/></svg><svg class="ic"><use href="#r4"/></svg>
      </div></section>
    </div>
    <section class="wide box">
      <h4>文本框</h4>
      <div class="opts">
        <span class="opt"><i class="radio on"></i>自由调整</span>
        <span class="opt"><i class="radio"></i>根据文字</span>
        <span class="opt"><i class="radio"></i>溢出缩排</span>
        <span class="opt"><i class="check"><svg viewBox="0 0 16 16"><path d="M4 8l3 3 5-6"/></svg></i>自动换行</span>
      </div>
    </section>
    <section class="wide margins">
      <div class="mhead"><h4>文本框边距</h4>
        <svg class="ic light"  viewBox="0 0 16 16"><path d="M1 3.500h14M5 3.500V1.500h6v2M3 3.500v11.500h10V3.500M6 7v5M8 7v5M10 7v5"/></svg>
        <svg class="ic light" viewBox="0 0 16 16"><path d="M13.500 5a6 6 0 1 0 1 4M14 1v4h-4"/></svg>
      </div>
      <div class="mrows">
        <svg class="mi" viewBox="0 0 16 16"><path d="M2 1v14M15 8H4M7 5L4 8l3 3"/></svg>
        <span class="spin"><i></i></span>
        <svg class="mi" viewBox="0 0 16 16"><path d="M14 1v14M1 8h11M9 5l3 3-3 3"/></svg>
        <span class="spin"><i></i></span>
        <svg class="mi" viewBox="0 0 16 16"><path d="M1 2h14M8 15V4M5 7l3-3 3 3"/></svg>
        <span class="spin"><i></i></span>
        <svg class="mi" viewBox="0 0 16 16"><path d="M1 14h14M8 1v11M5 9l3 3 3-3"/></svg>
        <span class="spin"><i></i></span>
      </div>
    </section>
    <div class="pscroll"><i></i></div>
  </aside>
</main>

<footer class="status">
  <span class="st-a">幻灯片 第 1 张，共 1 张</span>
  <svg class="ic grey st-b" viewBox="0 0 16 16"><path d="M8 3C6.500 1.500 4 1.500 2 2v11c2-.5 4.500-.5 6 1V3zM8 3c1.500-1.500 4-1.500 6-1v11c-2-.5-4.500-.5-6 1M10 7l1.500 1.500L14 5"/></svg>
  <span class="st-c">中文(中国)</span>
  <svg class="ic grey st-d" viewBox="0 0 16 16"><path d="M6 2a6 6 0 0 0-3 11"/><path stroke-width="2" d="M7 7l8 8M15 7l-8 8"/><path d="M6 5v3"/></svg>
  <span class="st-e">辅助功能: 调查</span>
  <span class="st-right">
    <svg class="ic grey" viewBox="0 0 16 16"><path d="M8 2L5.500 5h5zM2 8h12M3.500 11h9M2 14h12"/></svg><span class="st-t">备注</span>
    <svg class="ic darkfill st-cm" viewBox="0 0 16 16"><path d="M2 2h12q1.500 0 1.500 1.500v6q0 1.500-1.500 1.500H8l-3 4v-4H2Q.5 11 .5 9.500v-6Q.5 2 2 2z"/></svg><span class="st-t st-t2">批注</span>
    <span class="vbtn act"><svg class="ic grey2" viewBox="0 0 16 16"><path d="M1.500 1.500h13v13h-13zM5 1.500v13M5 11h9.500M8 4h4v4H8z"/></svg></span>
    <span class="vbtn"><svg class="ic grey2" viewBox="0 0 16 16"><path d="M2 2h5v5H2zM9.500 2h5v5h-5zM2 9.500h5v5H2zM9.500 9.500h5v5h-5z"/></svg></span>
    <span class="vbtn"><svg class="ic grey2" viewBox="0 0 16 16"><path d="M1.500 2.500c2.500-1 5-1 6.500 0 1.500-1 4-1 6.500 0v11c-2.500-1-5-1-6.500 0-1.500-1-4-1-6.500 0zM8 2.500v11M3.500 5h3M3.500 7.500h3M3.500 10h3M10 5h3M10 7.500h3M10 10h3"/></svg></span>
    <span class="vbtn"><svg class="ic grey2" viewBox="0 0 16 16"><path d="M1 2.500h14M2.500 2.500v7h11v-7M8 9.500V14M5 14.500h6"/></svg></span>
    <span class="zoom"><i class="zm">−</i><span class="track"><i></i></span><i class="zp">+</i></span>
    <span class="pct">100%</span>
    <svg class="ic grey2 fit" viewBox="0 0 16 16"><path d="M1 1h14v14H1z"/><path d="M3.500 6V3.500H6M10 3.500h2.500V6M12.500 10v2.500H10M6 12.500H3.500V10M8 7v2M7 8h2"/></svg>
  </span>
</footer>

<div class="watermark" aria-hidden="true">
  <span class="wm-bai">Bai</span>
  <svg class="wm-paw" viewBox="0 0 100 110">
    <ellipse cx="15" cy="41" rx="13" ry="17"/><ellipse cx="39" cy="17" rx="13" ry="17"/><ellipse cx="70" cy="18" rx="13" ry="17"/><ellipse cx="88" cy="48" rx="12" ry="17"/>
    <path d="M48 45c13 0 18 12 27 20 10 8 20 16 20 26 0 12-10 17-22 17-8 0-15-3-25-3s-15 3-23 3c-12 0-15-7-15-17 0-11 7-19 16-26 9-7 29-20 42-20z"/>
  </svg>
  <span class="wm-du">du</span>
  <span class="wm-cn">经验</span>
  <span class="wm-url">jingyan.baidu.com</span>
</div>
</div>
</body>
</html>
```
FILE: styles.css
```css
* { box-sizing: border-box; }
html, body { margin: 0; padding: 0; height: 100%; overflow: hidden; }
body { background: #e6e6e6; font: 12px/16px "Open Sans", "Noto Sans CJK SC", sans-serif; color: #444; }
h4 { margin: 0; font-weight: 400; font-size: 12px; line-height: 16px; color: #666; }
i, em { font-style: normal; }
.sprite { position: absolute; width: 0; height: 0; }
.svgt { font-family: "Liberation Sans", sans-serif; }
.app { position: relative; display: flex; flex-direction: column; width: 1920px; height: 1033px; overflow: hidden; }

.ic { display: block; width: 16px; height: 16px; flex: none; fill: none; stroke: #999; stroke-width: 1; }
.ic.white { stroke: #fff; }
.ic.dim { stroke: #d58b78; }
.ic.grey { stroke: #666; }
.ic.grey2 { stroke: #777; }
.ic.dark { stroke: #444; }
.ic.light { stroke: #bbb; }
.ic.darkfill { fill: #555; stroke: none; }
.chev { display: block; width: 7px; height: 7px; flex: none; fill: none; stroke: #666; }
.chev.light { stroke: #aaa; }
.chev.white { stroke: #fff; }

/* title bar */
.titlebar { position: relative; display: grid; grid-template-columns: 1fr auto 1fr; align-items: center; height: 34px; background: #b7472a; color: #fff; }
.ornament { position: absolute; left: 1400px; top: 0; width: 520px; height: 64px; z-index: 1; pointer-events: none; }
.qat { display: flex; align-items: center; padding-left: 21px; }
.undo { margin-left: 13px; }
.mini1 { margin-left: 5px; }
.redo { margin-left: 11px; }
.qgap { margin-left: 13px; }
.more { margin-left: 17px; width: 8px; height: 8px; }
.doctitle { white-space: nowrap; line-height: 18px; }
.winbox { position: relative; z-index: 2; display: flex; align-items: center; justify-content: flex-end; height: 34px; }
.uname { letter-spacing: 4px; margin-right: 7px; }
.avatar { display: flex; align-items: center; justify-content: center; width: 24px; height: 24px; margin-right: 12px; border-radius: 50%; background: #d4d4d4; }
.wbtn { display: flex; align-items: center; justify-content: center; width: 46px; height: 34px; }

/* tabs */
.tabs { position: relative; display: flex; align-items: center; height: 30px; padding-left: 3.5px; background: #b7472a; color: #fff; }
.tab { display: flex; align-items: center; justify-content: center; height: 30px; padding: 0 13.5px; white-space: nowrap; }
.tab-file { margin-right: 5px; }
.tab.active { background: #f3f3f3; color: #b7472a; }
.islide { letter-spacing: .15px; }
.bulb { margin-left: 15px; height: 18px; }
.tellme { padding-left: 10px; }
.share { position: relative; z-index: 2; display: flex; align-items: center; gap: 4px; margin-left: auto; padding-right: 24px; }

/* ribbon */
.ribbon { position: relative; display: flex; height: 95px; padding-top: 4px; background: #f3f3f3; border-bottom: 1px solid #d2d2d2; }
.group { position: relative; display: flex; flex-direction: column; flex: none; height: 86px; border-right: 1px solid #c6c6c6; }
.gbody { display: flex; height: 73px; }
.gbody.col { flex-direction: column; }
.glabel { position: relative; height: 13px; line-height: 14px; text-align: center; white-space: nowrap; }
.glabel.lc { padding-right: 16px; }
.launch { position: absolute; right: 3px; top: 1px; width: 8px; height: 8px; fill: none; stroke: #666; }
.launch.dim2 { stroke: #aaa; }
.g-clip { width: 127px; }
.g-slide { width: 134px; }
.g-font { width: 295px; }
.g-para { width: 325px; }
.g-draw { width: 341px; }
.g-edit { width: 85px; }
.g-save { width: 69px; }

.lbtn { display: flex; flex-direction: column; align-items: center; flex: none; white-space: nowrap; }
.ltext { display: flex; align-items: center; line-height: 15px; }
.off { color: #a6a6a6; }
.paste-btn { width: 40px; margin-left: 9px; padding-top: 4px; }
.paste-ic { width: 28px; height: 30px; margin-bottom: 3px; fill: none; stroke: none; }
.paste-btn .chev { margin-top: 3px; }
.new-btn { width: 47px; margin-left: 10px; padding-top: 6px; }
.new-ic { width: 30px; height: 24px; margin-bottom: 7px; fill: none; stroke: none; }
.inl { margin-left: 3px; }
.scol { display: flex; flex-direction: column; gap: 3px; flex: none; margin-left: 3px; padding-top: 1px; }
.scol.tight { margin-left: 7px; }
.scol.flat { margin-left: 0; }
.srow { display: flex; align-items: center; gap: 4px; height: 20px; white-space: nowrap; }
.srow .ml { margin-left: 6px; }
.scol.tight .srow { gap: 3px; }
.scol.tight .chev { margin-left: 1px; }
.scol.flat .srow { gap: 3px; }
.scol.flat .chev { margin-left: 1px; }
.draw-s { margin-left: 6px; }
.draw-s .srow { gap: 3px; }
.edit-s { margin-left: 10px; }

.trow { display: flex; align-items: center; flex: none; white-space: nowrap; color: #a6a6a6; }
.trow.top { height: 23px; margin-top: 7px; }
.trow.bot { height: 20px; margin-top: 9px; }
.first-b { padding-left: 6px; }
.g-font .trow.top { padding-left: 8px; }
.tic { display: block; width: 18px; height: 18px; flex: none; fill: none; stroke: #a6a6a6; }
.w20 { width: 20px; height: 16px; }
.tx { display: flex; align-items: center; justify-content: center; width: 24px; height: 20px; font-size: 13px; flex: none; color: #a6a6a6; font-family: "Liberation Sans", sans-serif; }
.tx .tic { width: 20px; height: 20px; }
.tx.it { font-style: italic; }
u.tx { text-decoration: underline; }
s.tx { font-size: 11px; }
.shadow { text-shadow: 1px 1px 1px #bbb; }
.big { font-size: 16px; }
.w10 { width: 10px; padding: 0 1.500px; }
.vsep { display: block; flex: none; width: 1px; height: 23px; background: #c6c6c6; }
.m1 { margin-left: 1px; } .m2 { margin-left: 2px; } .m3 { margin-left: 3px; } .m4 { margin-left: 4px; } .m5 { margin-left: 5px; }
.m6 { margin-left: 6px; } .m7 { margin-left: 7px; } .m8 { margin-left: 8px; } .m9 { margin-left: 9px; }
.combo { display: flex; align-items: center; justify-content: space-between; height: 23px; background: #e6e6e6; border: 1px solid #8a8a8a; }
.c-name { width: 147px; justify-content: flex-end; }
.c-size { width: 50px; margin-left: 3px; }
.c-size em { padding-left: 3px; font-size: 13px; color: #a6a6a6; }
.drop { display: flex; align-items: center; justify-content: center; width: 13px; height: 21px; border-left: 1px solid #8a8a8a; }
.pleft { flex: none; width: 187px; }

.gallery { display: flex; width: 138px; height: 62px; margin: 2px 0 0 8px; flex: none; background: #fff; border: 1px solid #c6c6c6; }
.shapes { display: grid; grid-template-columns: repeat(6, 20px); grid-auto-rows: 20px; flex: none; width: 122px; padding-left: 1px; }
.sh { display: block; width: 16px; height: 16px; margin: 2px; fill: none; stroke: #555; }
.gscroll { display: flex; flex-direction: column; flex: 1; border-left: 1px solid #d6d6d6; }
.gs { display: flex; align-items: center; justify-content: center; flex: 1; border-bottom: 1px solid #d6d6d6; }
.gs:last-child { border-bottom: 0; }
.gs.on { background: #e6e6e6; }
.gs svg { display: block; width: 8px; height: 8px; fill: #555; }
.gs.on svg { fill: #aaa; }
.arr-btn { width: 34px; margin-left: 6px; padding-top: 4px; }
.arr-ic { width: 28px; height: 28px; margin-bottom: 5px; fill: none; stroke: none; }
.arr-btn .chev, .qs-btn .chev { margin-top: 3px; }
.qs-btn { width: 48px; margin-left: 7px; padding-top: 4px; }
.qs-ic { width: 32px; height: 30px; margin-bottom: 3px; fill: none; stroke: none; }
.save-btn { width: 68px; padding-top: 4px; }
.save-ic { width: 28px; height: 28px; margin-bottom: 5px; fill: none; stroke: none; }
.collapse { position: absolute; left: 1901px; top: 84px; width: 12px; height: 8px; fill: none; stroke: #555; }

/* main */
.main { display: flex; flex: 1; min-height: 0; }
.thumbs { display: flex; flex: none; width: 267px; padding: 16px 0 0 14px; background: #e6e6e6; border-right: 1px solid #c6c6c6; }
.num { width: 20px; font-size: 14px; line-height: 14px; color: #d2573a; font-family: "Liberation Sans", sans-serif; }
.thumb { width: 213px; height: 123px; border: 3px solid #b7472a; background: #fff; box-shadow: inset 0 0 0 1px #e3e3e3; }
.thumb svg { display: block; width: 207px; height: 117px; }
.work { display: flex; flex-direction: column; flex: 1; min-width: 0; }
.canvas { flex: 1; padding: 63px 0 0 44px; border-bottom: 1px solid #c6c6c6; }
.strip { height: 2px; }
.slide { width: 1280px; height: 720px; background: #fff; box-shadow: 0 0 0 1px #bdbdbd; }
.slide svg { display: block; width: 1280px; height: 720px; }

/* design panel */
.panel { position: relative; flex: none; width: 270px; background: #fff; border-left: 1px solid #d6d6d6; }
.ptitle { padding: 8px 0 0 9px; font-size: 13px; line-height: 16px; color: #555; }
.ptools { display: flex; justify-content: flex-end; gap: 20px; height: 39px; padding: 14px 21px 0 0; }
.pgrid { display: grid; grid-template-columns: 129px 130px; width: 259px; margin-left: 4px; border-right: 1px solid #e6e6e6; }
.sec { height: 132px; padding-top: 17px; border-top: 1px solid #e6e6e6; }
.sec:nth-child(even) { border-left: 1px solid #e0e0e0; }
.sec.short { height: 103px; }
.sec h4, .wide h4 { margin-left: 16px; }
.icons { display: grid; grid-template-columns: repeat(3, 35px); grid-auto-rows: 28px; justify-items: center; align-items: center; margin: 3px 0 0 9.500px; }
.hov { box-sizing: content-box; padding: 2px; background: #f5f5f5; border-radius: 3px; }
.wide { width: 259px; margin-left: 4px; border-top: 1px solid #e6e6e6; }
.box { height: 96px; padding-top: 17px; }
.opts { display: grid; grid-template-columns: 118px auto; grid-auto-rows: 25px; padding: 3px 0 0 16px; align-items: center; }
.opt { display: flex; align-items: center; gap: 4px; font-size: 11px; color: #9a9a9a; }
.radio { display: block; width: 16px; height: 16px; border: 1px solid #eee; border-radius: 50%; }
.radio.on { border: 5px solid #ffb3ac; }
.check { display: block; width: 16px; height: 16px; border-radius: 3px; background: #ffb3ac; }
.check svg { display: block; width: 16px; height: 16px; fill: none; stroke: #fff; stroke-width: 1.500; }
.margins { height: 133px; padding-top: 19.500px; border-bottom: 1px solid #e6e6e6; }
.mhead { display: flex; align-items: center; gap: 12px; padding-right: 17px; }
.mhead h4 { margin-right: auto; }
.mrows { display: grid; grid-template-columns: 15px 90px 15px 90px; grid-auto-rows: 26px; gap: 8px 6px; margin: 8.500px 0 0 14px; align-items: center; }
.mi { display: block; width: 15px; height: 15px; fill: none; stroke: #ddd; }
.spin { position: relative; height: 26px; border: 1px solid #ddd; }
.spin i { position: absolute; right: 6px; top: 6px; width: 9px; height: 12px; }
.spin i::before, .spin i::after { content: ""; position: absolute; left: 0; border: 4.500px solid transparent; }
.spin i::before { top: -4px; border-bottom: 4px solid #ddd; }
.spin i::after { bottom: -4px; border-top: 4px solid #ddd; }
.pscroll { position: absolute; right: 1px; top: 719px; display: flex; align-items: flex-end; width: 7px; height: 49px; padding: 1px; border: 1px solid #777; border-radius: 3px; background: #fff; }
.pscroll i { display: block; width: 100%; height: 25px; background: #ed7d31; }

/* status bar */
.status { display: flex; align-items: center; flex: none; height: 23px; padding-left: 7px; background: #f3f3f3; border-top: 1px solid #c6c6c6; border-bottom: 1px solid #e3eef7; color: #444; white-space: nowrap; }
.st-a { word-spacing: 1.500px; }
.st-b { margin-left: 18px; }
.st-c { margin-left: 15px; }
.st-d { margin-left: 17px; }
.st-e { margin-left: 3px; }
.st-right { display: flex; align-items: center; height: 100%; margin-left: auto; }
.st-t { margin-left: 3px; }
.st-cm { margin-left: 19px; }
.st-t2 { margin-left: 2px; margin-right: 19px; }
.vbtn { display: flex; align-items: center; justify-content: center; width: 40px; height: 100%; }
.vbtn.act { background: #c6c6c6; }
.zoom { display: flex; align-items: center; margin-left: 4px; }
.zm, .zp { width: 10px; text-align: center; font-size: 14px; line-height: 16px; }
.track { position: relative; display: block; width: 100px; height: 1px; margin: 0 4px 0 5px; background: #444; }
.track i { position: absolute; left: 47px; top: -5px; width: 5px; height: 11px; background: #666; }
.pct { margin-left: 10.500px; font-size: 13px; color: #555; }
.fit { margin: 0 5px 0 10px; }

/* watermark */
.watermark { position: absolute; left: 0; top: 0; width: 1920px; height: 1033px; pointer-events: none; color: rgba(255, 255, 255, .88); font-family: "Liberation Sans", sans-serif; font-weight: 700; text-shadow: 0 0 2px rgba(70, 70, 70, .75), 0 0 3px rgba(70, 70, 70, .45); }
.watermark span { position: absolute; white-space: nowrap; line-height: 1; }
.watermark .wm-bai { left: 1471px; top: 872px; font-size: 84px; line-height: .85; transform: scaleX(.86); transform-origin: 0 0; }
.wm-du { left: 1612px; top: 886px; font-size: 48px; color: rgba(205, 205, 205, .55); }
.watermark .wm-cn { left: 1695px; top: 875px; font-size: 58px; font-family: "Noto Sans CJK SC", sans-serif; line-height: 1.100; }
.wm-url { left: 1474px; top: 944px; font-size: 42.500px; font-weight: 400; }
.wm-paw { position: absolute; left: 1590px; top: 830px; width: 100px; height: 110px; fill: rgba(255, 255, 255, .8); stroke: rgba(110, 110, 110, .7); stroke-width: 1.200; }
```
